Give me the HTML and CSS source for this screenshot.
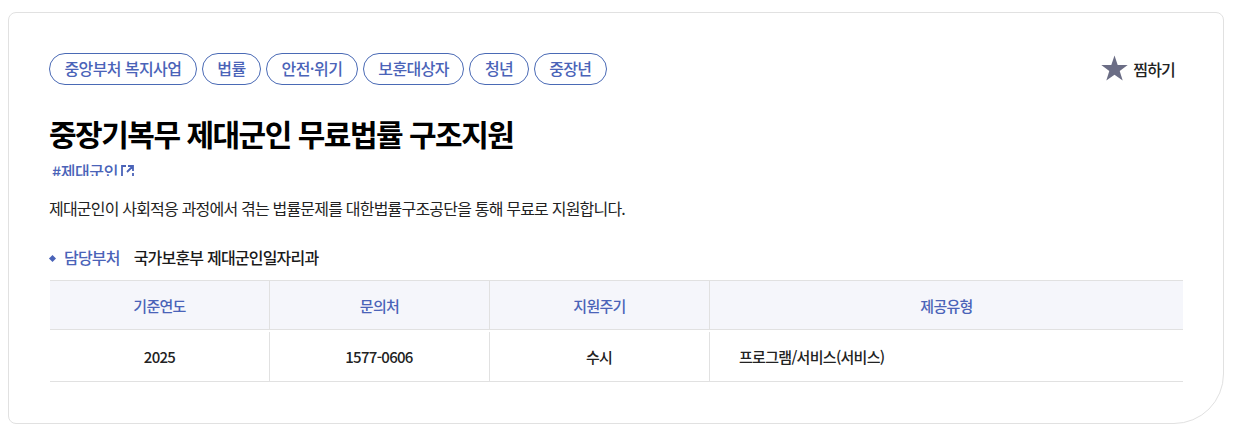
FILE: index.html
```html
<!DOCTYPE html>
<html lang="ko">
<head>
    <meta charset="UTF-8">
    <title>중장기복무 제대군인 무료법률 구조지원</title>
    <link rel="stylesheet" href="styles.css">
</head>
<body>
    <div class="card">
        <div class="top">
            <ul class="tags">
                <li class="tag">중앙부처 복지사업</li>
                <li class="tag">법률</li>
                <li class="tag">안전·위기</li>
                <li class="tag">보훈대상자</li>
                <li class="tag">청년</li>
                <li class="tag">중장년</li>
            </ul>
            <a class="fav" href="#">
                <svg class="star" width="27" height="26" viewBox="0 0 27 26"><path d="M13.500 0.500l3.200 9.400h10l-8 6 3 9.600-8.200-5.800-8.200 5.800 3-9.600-8-6h10z" fill="#6b6d85"/></svg>
                찜하기
            </a>
        </div>
        <h2 class="title">중장기복무 제대군인 무료법률 구조지원</h2>
        <div class="hash_wrap">
            <a class="hash" href="#">#제대군인<svg class="ext" width="13" height="13" viewBox="0 0 13 13"><path d="M5 1H1v11h11V8M7 1h5v5M12 1L6 7" fill="none" stroke="#4a63b8" stroke-width="1.800"/></svg></a>
        </div>
        <p class="desc">제대군인이 사회적응 과정에서 겪는 법률문제를 대한법률구조공단을 통해 무료로 지원합니다.</p>
        <div class="dept">
            <span class="dept_label">담당부처</span>
            <span class="dept_name">국가보훈부 제대군인일자리과</span>
        </div>
        <table class="info">
            <tr>
                <th class="col_first">기준연도</th>
                <th class="col_s">문의처</th>
                <th class="col_s">지원주기</th>
                <th>제공유형</th>
            </tr>
            <tr>
                <td>2025</td>
                <td>1577-0606</td>
                <td>수시</td>
                <td class="left">프로그램/서비스(서비스)</td>
            </tr>
        </table>
    </div>
</body>
</html>
```

FILE: styles.css
```css
* {
    box-sizing: border-box;
}

body {
    margin: 0;
    padding: 12px 10px 8px 8px;
    background: #fff;
    font-family: "Noto Sans CJK KR", "Noto Sans", sans-serif;
    color: #1a1a1a;
}

.card {
    height: 412px;
    padding: 40px 40px 0;
    border: 1px solid #e1e1e1;
    border-radius: 8px 8px 50px 8px;
}

.top {
    display: flex;
    justify-content: space-between;
    align-items: center;
}

.tags {
    display: flex;
    gap: 5px;
    margin: 0;
    padding: 0;
    list-style: none;
}

.tag {
    height: 32px;
    padding: 0 14.5px;
    border: 1px solid #4a6ab5;
    border-radius: 16px;
    font-size: 16px;
    font-weight: 500;
    line-height: 29px;
    letter-spacing: -0.6px;
    color: #4a63b8;
}

.fav {
    display: flex;
    align-items: center;
    gap: 5px;
    margin-right: 8px;
    font-size: 16px;
    font-weight: 500;
    letter-spacing: -0.8px;
    color: #222;
    text-decoration: none;
}

.star {
    margin-top: -3px;
}

.title {
    margin: 27px 0 0;
    font-size: 30px;
    font-weight: 700;
    line-height: 42px;
    letter-spacing: -1.5px;
    color: #000;
}

/* the tag line is cut off by its wrapper */
.hash_wrap {
    height: 16px;
    margin-top: 6px;
    padding-left: 3px;
    overflow: hidden;
}

.hash {
    display: flex;
    align-items: flex-start;
    gap: 3px;
    font-size: 16px;
    font-weight: 500;
    line-height: 22px;
    letter-spacing: -0.4px;
    color: #4a63b8;
    text-decoration: none;
}

.ext {
    margin-top: 5px;
}

.desc {
    margin: 20px 0 0;
    font-size: 16px;
    line-height: 24px;
    letter-spacing: -0.8px;
    color: #222;
}

.dept {
    display: flex;
    align-items: center;
    margin-top: 25px;
    font-size: 16px;
    font-weight: 500;
    line-height: 24px;
    letter-spacing: -0.8px;
}

.dept_label {
    margin-right: 14px;
    color: #4a63b8;
}

.dept_label::before {
    content: "";
    display: inline-block;
    width: 5px;
    height: 5px;
    margin: 0 9px 3px 1px;
    background: #4a63b8;
    transform: rotate(45deg);
}

.info {
    width: calc(100% - 1px);
    margin: 11px 0 0 1px;
    table-layout: fixed;
    border-collapse: separate;
    border-spacing: 0;
    border-top: 1px solid #e1e1e1;
    font-size: 15px;
    letter-spacing: -0.7px;
}

th {
    height: 49px;
    padding: 0;
    background: #f5f6fb;
    border-bottom: 1px solid #e1e1e1;
    border-left: 1px solid #e1e1e1;
    font-weight: 500;
    color: #4a63b8;
}

td {
    height: 52px;
    padding: 1px 0 0;
    border-bottom: 1px solid #e1e1e1;
    background: linear-gradient(#e1e1e1, #e1e1e1) left 2px / 1px 100% no-repeat;
    font-weight: 500;
    text-align: center;
    color: #222;
}

th:first-child {
    border-left: none;
}

td:first-child {
    background: none;
}

.col_first {
    width: 219px;
}

.col_s {
    width: 220px;
}

td.left {
    padding-left: 30px;
    text-align: left;
}
```
